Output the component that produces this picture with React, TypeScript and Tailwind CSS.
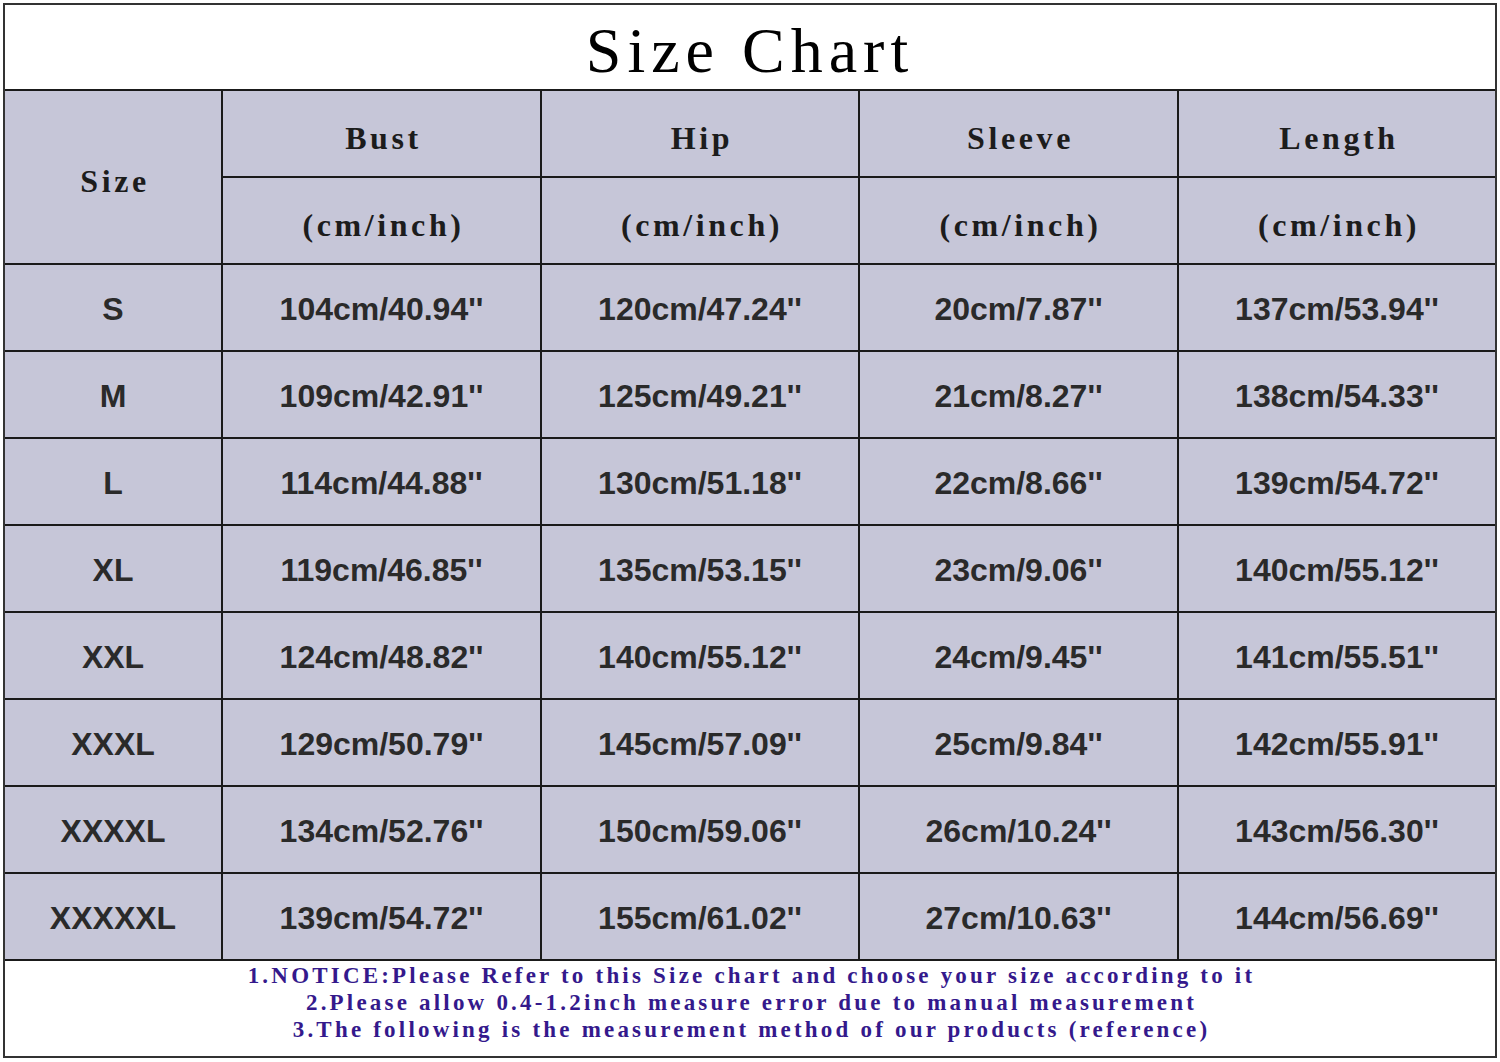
const rows: [string, string, string, string, string][] = [
  ["S", "104cm/40.94''", "120cm/47.24''", "20cm/7.87''", "137cm/53.94''"],
  ["M", "109cm/42.91''", "125cm/49.21''", "21cm/8.27''", "138cm/54.33''"],
  ["L", "114cm/44.88''", "130cm/51.18''", "22cm/8.66''", "139cm/54.72''"],
  ["XL", "119cm/46.85''", "135cm/53.15''", "23cm/9.06''", "140cm/55.12''"],
  ["XXL", "124cm/48.82''", "140cm/55.12''", "24cm/9.45''", "141cm/55.51''"],
  ["XXXL", "129cm/50.79''", "145cm/57.09''", "25cm/9.84''", "142cm/55.91''"],
  ["XXXXL", "134cm/52.76''", "150cm/59.06''", "26cm/10.24''", "143cm/56.30''"],
  ["XXXXXL", "139cm/54.72''", "155cm/61.02''", "27cm/10.63''", "144cm/56.69''"],
];

const headers = ["Bust", "Hip", "Sleeve", "Length"];

function HeadCell({ text }: { text: string }) {
  return (
    <div className="flex items-center justify-center bg-[#c6c6d8] pt-[8px] pl-[4px] font-['Liberation_Serif',serif] text-[32px] font-bold tracking-[3.6px] text-[#1c1c1c]">
      {text}
    </div>
  );
}

export default function App() {
  return (
    <div className="min-h-[1062px] w-[1500px] bg-white pl-[3px] pt-[3px]">
      <div className="flex w-[1494px] flex-col gap-[2px] border-2 border-[#333] bg-[#1a1a1a]">
        <div className="flex h-[84px] items-center justify-center bg-white pt-[8px]">
          <span className="font-['Liberation_Serif',serif] text-[64px] tracking-[6px] text-black">
            Size Chart
          </span>
        </div>

        <div className="grid auto-rows-[85px] grid-cols-[216px_317px_316px_317px_316px] gap-[2px]">
          <div className="row-span-2 flex items-center justify-center bg-[#c6c6d8] pt-[8px] pl-[4px] font-['Liberation_Serif',serif] text-[32px] font-bold tracking-[3.6px] text-[#1c1c1c]">
            Size
          </div>
          {headers.map((h) => (
            <HeadCell key={h} text={h} />
          ))}
          {headers.map((h) => (
            <HeadCell key={h + "-unit"} text="(cm/inch)" />
          ))}

          {rows.map((r) =>
            r.map((v, i) => (
              <div
                key={r[0] + i}
                className="flex items-center justify-center bg-[#c6c6d8] pt-[2px] font-['Liberation_Sans',Arial,sans-serif] text-[32px] font-bold text-[#2a2a2a]"
              >
                {v}
              </div>
            ))
          )}
        </div>

        <div className="flex h-[95px] flex-col items-center bg-white pt-[1px] pl-[3px] font-['Liberation_Serif',serif] text-[23px] font-bold leading-[27px] tracking-[3.2px] text-[#34198c]">
          <div>1.NOTICE:Please Refer to this Size chart and choose your size according to it</div>
          <div>2.Please allow 0.4-1.2inch measure error due to manual measurement</div>
          <div>3.The following is the measurement method of our products (reference)</div>
        </div>
      </div>
    </div>
  );
}
